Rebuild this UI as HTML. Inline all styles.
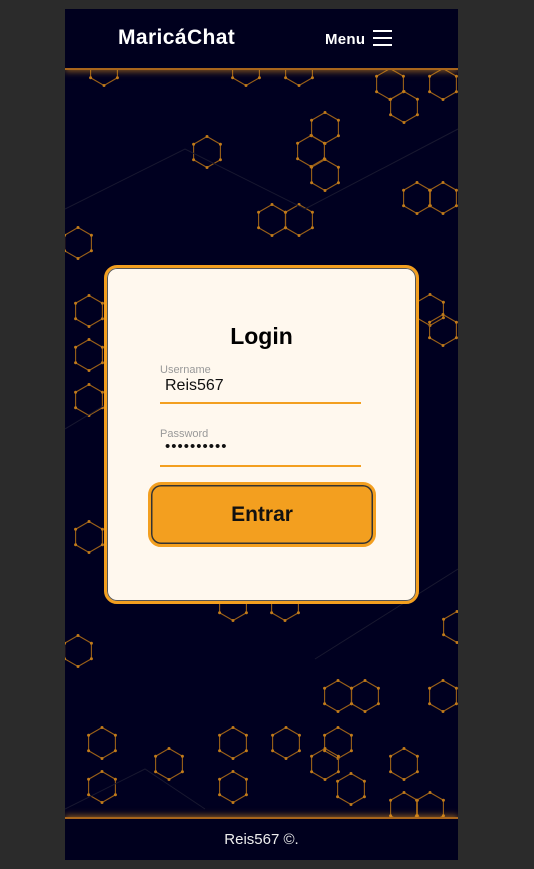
<!DOCTYPE html>
<html><head><meta charset="utf-8"><style>
html,body{margin:0;padding:0;width:534px;height:869px;background:#2b2b2b;overflow:hidden;font-family:"Liberation Sans",sans-serif}
#f{position:absolute;left:65px;top:9px;width:393px;height:851px;background:#000020;overflow:hidden}
#hd{position:absolute;left:0;top:0;width:393px;height:59px;background:#00001e;border-bottom:2px solid #a8651c;box-shadow:0 2px 6px rgba(243,160,32,.5);z-index:2}
#logo{position:absolute;left:53px;top:17px;color:#fff;font-weight:900;font-size:21px;letter-spacing:.4px}
#menu{position:absolute;left:260px;top:22px;color:#fff;font-weight:bold;font-size:15px;letter-spacing:.3px}
.bar{position:absolute;left:308px;width:19px;height:2px;background:#fff}
#ft{position:absolute;left:0;top:808px;width:393px;height:43px;background:#00001e;border-top:2px solid #a8651c;box-shadow:0 -2px 6px rgba(243,160,32,.5);color:#eee;font-size:15px;text-align:center;line-height:42px;z-index:2}
svg{position:absolute;left:0;top:0}
#card{position:absolute;left:39px;top:256px;width:309px;height:333px;background:#fff8ee;border:3px solid #f39f1f;border-radius:13px;box-shadow:inset 0 0 0 1px #555;z-index:3}
h1{margin:0;position:absolute;top:55px;width:100%;text-align:center;font-size:23px;color:#000}
.lab{position:absolute;left:53px;font-size:11px;color:#999}
.val{position:absolute;left:58px;font-size:16px;color:#111}
.ln{position:absolute;left:53px;width:201px;height:2px;background:#f39f1f}
#btn{position:absolute;left:41px;top:214px;width:222px;height:59px;background:#f39f1f;border:3px solid #f39f1f;border-radius:13px;box-shadow:inset 0 0 0 1.5px #333;text-align:center;line-height:59px;font-weight:bold;font-size:21px;color:#111}
</style></head><body>
<div id="f">
<svg width="393" height="851" id="bg"></svg>
<div id="hd"><div id="logo">MaricáChat</div><div id="menu">Menu</div>
<div class="bar" style="top:21px"></div><div class="bar" style="top:28px"></div><div class="bar" style="top:35px"></div></div>
<div id="card">
<h1>Login</h1>
<div class="lab" style="top:96px">Username</div>
<div class="val" style="top:109px">Reis567</div>
<div class="ln" style="top:134px"></div>
<div class="lab" style="top:160px">Password</div>
<div class="val" style="top:170px;letter-spacing:1px;font-size:15px">••••••••••</div>
<div class="ln" style="top:197px"></div>
<div id="btn">Entrar</div>
</div>
<div id="ft">Reis567 ©.</div>
</div>
<script>
var c=[[207,152],[325,128],[311,151],[325,175],[272,220],[299,220],[390,84],[404,107],[417,198],[78,243],[89,311],[89,355],[89,400],[430,310],[89,537],[78,651],[233,605],[285,605],[457,627],[338,696],[365,696],[443,696],[102,743],[233,743],[286,743],[338,743],[169,764],[325,764],[351,789],[404,764],[102,787],[233,787],[404,808],[430,808],[104,70],[246,70],[299,70],[443,84],[443,198],[443,330]];
var s='',r=15.5,w=13.4;
c.forEach(function(p){var x=p[0]-65,y=p[1]-9;var pts=[[x,y-r],[x+w,y-r/2],[x+w,y+r/2],[x,y+r],[x-w,y+r/2],[x-w,y-r/2]];
s+='<polygon points="'+pts.map(function(q){return q.join(',')}).join(' ')+'" fill="none" stroke="#9a6018" stroke-width="1.1"/>';
pts.forEach(function(q){s+='<circle cx="'+q[0]+'" cy="'+q[1]+'" r="1.5" fill="#c07a1a"/>'});});
s+='<path d="M0 200 L120 140 L240 200 L393 120 M0 420 L100 360 M250 650 L393 560 M0 800 L80 760 L140 800" stroke="#181830" fill="none"/>';
document.getElementById('bg').innerHTML=s;
</script>
</body></html>
